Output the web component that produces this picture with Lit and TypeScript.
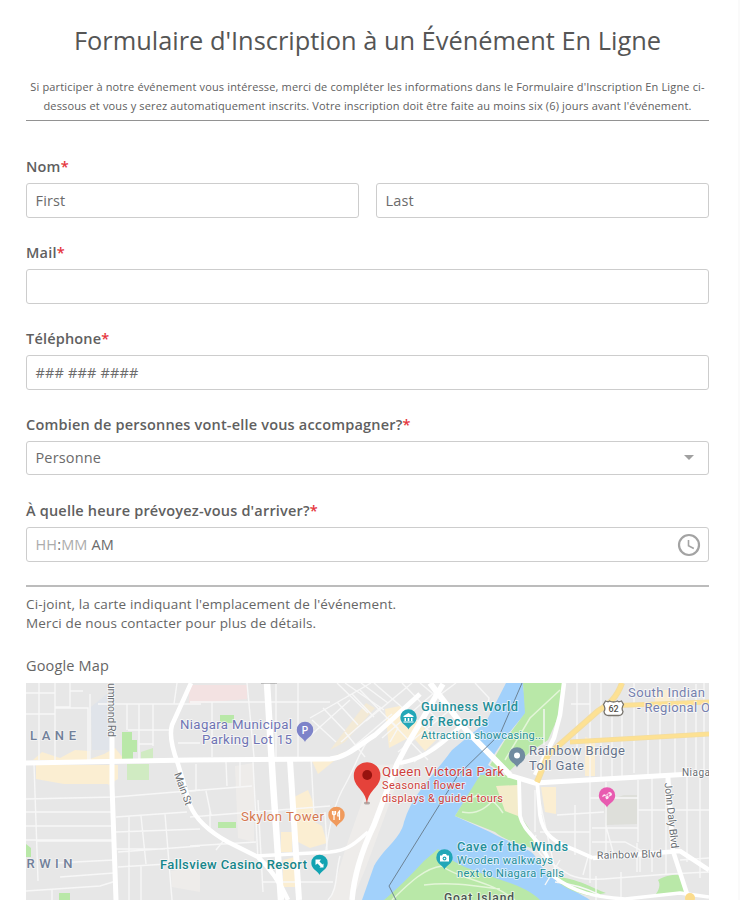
import { LitElement, html, svg, css } from "lit";
import { customElement, property } from "lit/decorators.js";

type Label = { x: number; y: number; w: number; size: number; cls: string; text: string; rot?: number };

const minorRoads = [
  // north-west blocks
  "M39 683V760M55 683V762M26 693H55M26 714H55M70 683V707H55M70 691H83M55 708H88V760M90 694V760M98 704H201M127 704V730M139 704V760M153 704V746M177 683L174 704M128 730H170M139 744H153M178 743H200",
  "M26 799L115 797L200 790M26 826H112M26 840H112M26 812H114M36 841H113M34 764L38 881M55 863L114 860M60 877L114 873M26 891L100 886L116 881M52 889V900",
  "M116 817L187 812M116 832L200 829M129 816V866M141 816L146 864M165 814L172 900M118 867L200 862M118 852L200 846M129 866V900M141 866V900M196 790V764M116 849H165",
  // centre blocks
  "M190 702H310M212 702V757M276 683V757M298 683V757M247 683L254 757M253 762L258 860M190 791L252 786M206 791L211 815M190 817L330 806M311 757L314 815M226 762L227 786M240 762V786M190 846L256 842M224 840L216 850M258 800L263 892M210 810V830M270 702H330",
  "M310 718L371 683M312 720L336 742M323 708L345 731M337 702L358 725M352 694L374 717M337 683L368 713M345 683L384 710M361 683L388 703M311 735L350 700M345 754L392 714M365 757L345 732M325 812L327 850M341 742L380 708",
  "M326 850C330 820 336 800 345 785C358 762 358 752 372 735M262 882H333M340 856C335 875 338 890 328 900",
  // upper centre streets
  "M360 690L428 760M374 683L442 742M402 683L438 720M366 721L412 683M382 738L435 692M398 752L450 710M414 762L462 724M420 683L437 697L456 683M388 718L398 728L390 742M475 683L489 698L487 711",
  // east grid
  "M577 683V760M590 683V779M601 683V778M612 713V776M622 710V776M634 683V773M648 706V776M660 703V774M675 690V774M686 690V774M696 684V774M704 683V772M571 704H590M544 709V745M536 784L558 883M590 782V883M606 782V858M638 780V842M652 776V872M666 776V875M687 776V862M700 776V878M557 815L604 812M590 798H638M592 828H638M638 810H709M540 832H590M592 842H625L640 850V872M606 826L613 852M535 832V790M575 805V855",
  "M536 835C530 850 545 860 570 875C592 884 600 877 709 872M560 860L545 885M588 857L583 875M596 876V900M621 872V900M637 843V872M680 860L709 858M555 882C575 884 590 890 600 895",
];

const mainRoads = [
  { d: "M26 763L190 760L330 759C348 757 360 744 375 735L420 694", w: 5 },
  { d: "M112 735L112 785L116 900", w: 5 },
  { d: "M191 683L172 725C169 735 172 748 178 764L190 805C196 820 210 832 228 842L258 857C270 868 280 882 288 900", w: 4.5 },
  { d: "M267 683L273 783L281 900", w: 6.5 },
  { d: "M290 760L299 900", w: 6 },
  { d: "M256 856L330 852C350 850 356 842 368 832", w: 3.5 },
  { d: "M443 684L407 745L397 764L374 825C362 850 354 876 352 900", w: 5.5 },
  { d: "M400 763C425 759 445 742 465 722", w: 4 },
  { d: "M430 683L466 730L510 775", w: 6 },
  { d: "M564 683L560 715L554 738L535 775", w: 4.5 },
  { d: "M508 775L535 783L709 773", w: 5 },
  { d: "M519 779L520 816C524 832 538 838 548 858M537 780L540 815C543 835 554 842 575 850L593 858", w: 3.8 },
  { d: "M593 858L680 851L709 870", w: 4.5 },
  { d: "M668 775L673 851L689 900", w: 4.5 },
  { d: "M553 876C575 893 595 897 625 899L680 893L709 897", w: 3.5 },
];

const parks = [
  "M122 732H132V740H137V752H133V759H122Z",
  "M220 715H234V723H220Z",
  "M218 822H236V828H218Z",
  "M26 844L31 848V857H26Z",
  "M59 893H70V900H59Z",
  "M523 683H564L559 715L548 740L530 752L506 774L490 765L505 740L525 713Z",
  "M506 775L518 779L520 815L530 830L536 850C524 845 505 841 495 832L455 816L466 798L480 775Z",
  "M658 880C665 875 676 874 681 875L688 892L655 895C659 891 661 884 658 880Z",
  "M553 876C580 879 592 888 606 893L590 896C570 892 558 884 553 876Z",
];

const sand = [
  "M33 760L42 752L60 758L75 750L90 751V759L104 754L115 748L125 760Z",
  "M36 765H110V784H64L36 779Z",
  "M108 765H118V779L108 785Z",
  "M345 752L318 774L312 761L330 758Z",
  "M294 797L308 790L313 802V821L322 826L327 843L310 848L298 842Z",
  "M281 832H292V852H281ZM283 860L295 857V887H283Z",
  "M385 709L400 706L437 739L425 751L412 736L389 748Z",
  "M497 786L518 785V816L505 811Z",
  "M541 787H556V814L545 812Z",
  "M585 737L595 740V776H585Z",
  "M655 690H670V703L655 706Z",
];

const labels: Label[] = [
  { x: 30, y: 740, w: 46, size: 13, cls: "area", text: "LANE" },
  { x: 26.5, y: 867.5, w: 46, size: 13, cls: "area", text: "RWIN" },
  { x: 108, y: 683, w: 54, size: 10.5, cls: "street", text: "ummond Rd", rot: 90 },
  { x: 174, y: 774, w: 34, size: 10.5, cls: "street", text: "Main St", rot: 70 },
  { x: 180, y: 729, w: 112, size: 13.2, cls: "indigo", text: "Niagara Municipal" },
  { x: 202, y: 744, w: 90, size: 13.2, cls: "indigo", text: "Parking Lot 15" },
  { x: 241, y: 820.5, w: 83, size: 13.2, cls: "orange", text: "Skylon Tower" },
  { x: 160, y: 869, w: 147, size: 13, cls: "teal bold", text: "Fallsview Casino Resort" },
  { x: 421, y: 711, w: 97, size: 12.8, cls: "teal", text: "Guinness World" },
  { x: 421, y: 726, w: 67, size: 12.8, cls: "teal", text: "of Records" },
  { x: 421, y: 739, w: 123, size: 11, cls: "teal light", text: "Attraction showcasing..." },
  { x: 382, y: 776, w: 122, size: 13.2, cls: "red", text: "Queen Victoria Park" },
  { x: 382, y: 789, w: 83, size: 11, cls: "red", text: "Seasonal flower" },
  { x: 382, y: 802, w: 121, size: 11, cls: "red", text: "displays & guided tours" },
  { x: 529, y: 755, w: 96, size: 13, cls: "slate", text: "Rainbow Bridge" },
  { x: 529, y: 769.5, w: 55, size: 13, cls: "slate", text: "Toll Gate" },
  { x: 628, y: 697, w: 77, size: 13, cls: "violet", text: "South Indian" },
  { x: 637, y: 712, w: 73, size: 13, cls: "violet", text: "- Regional O" },
  { x: 682, y: 776, w: 28, size: 10, cls: "street", text: "Niaga" },
  { x: 664.5, y: 783, w: 66, size: 10.5, cls: "street", text: "John Daly Blvd", rot: 84 },
  { x: 597, y: 859, w: 65, size: 10.5, cls: "street", text: "Rainbow Blvd", rot: -1.5 },
  { x: 457, y: 851, w: 111, size: 12.8, cls: "teal", text: "Cave of the Winds" },
  { x: 457, y: 864, w: 96, size: 11, cls: "teal light", text: "Wooden walkways" },
  { x: 457, y: 877, w: 107, size: 11, cls: "teal light", text: "next to Niagara Falls" },
  { x: 444, y: 902, w: 70, size: 12, cls: "dark", text: "Goat Island" },
];

const pin = (x: number, y: number, color: string, glyph: unknown) => svg`
  <g transform="translate(${x} ${y})">
    <path d="M0 11.5C-1 7.5-8.2 6-8.2-.6A8.2 8.2 0 0 1 8.2-.6C8.2 6 1 7.5 0 11.5Z" fill=${color}></path>
    ${glyph}
  </g>`;

@customElement("venue-map")
class VenueMap extends LitElement {
  static styles = css`
    :host { display: block; height: 217px; overflow: hidden; }
    svg { display: block; width: 100%; height: 100%; }
    text { font-family: Roboto, "Liberation Sans", sans-serif; font-weight: 500; paint-order: stroke; stroke: #fff; stroke-opacity: .65; stroke-width: 1.8px; stroke-linejoin: round; }
    .area { fill: #71809a; stroke-opacity: .4; }
    .street { fill: #6b6f74; font-weight: 400; }
    .indigo { fill: #6f74b4; font-weight: 400; }
    .violet { fill: #7580ae; font-weight: 400; }
    .orange { fill: #d57850; font-weight: 400; }
    .teal { fill: #238f98; }
    .bold { fill: #16868b; }
    .red { fill: #cf3f3b; font-weight: 400; }
    .slate { fill: #65738b; font-weight: 400; }
    .dark { fill: #4b5553; }
    .light { font-weight: 400; }
    .plain { stroke: none; }
    .minor { stroke: #f7f7f7; stroke-width: 1.4; fill: none; }
    .major { stroke: #fff; fill: none; stroke-linejoin: round; }
    .casing { stroke: #f3dda0; fill: none; }
    .highway { stroke: #fde193; fill: none; }
    .path { stroke: #e3f5d8; stroke-width: 1.5; fill: none; }
    .border { stroke: #6c8294; stroke-width: 1; fill: none; }
  `;

  render() {
    return html`<svg viewBox="26 683 683 217" preserveAspectRatio="none" role="img" aria-label="Google Map">
      <rect x="26" y="683" width="683" height="217" fill="#e7e7e7"></rect>
      <path d="M91 707L112 690V750H92Z" fill="#e0e4ea"></path>
      <path d="M189 685H247V699L189 704Z" fill="#f3e2e2"></path>
      <path d="M235 766L254 763V842L238 838ZM171 871L200 866V892L172 887ZM404 764L365 870L352 900H330L345 850L375 765Z" fill="#eeecea"></path>
      <path d="M604 802L624 795L637 795V824L606 825Z" fill="#dedfda"></path>
      <path d="M127 764H149V780H127ZM141 752L153 748V762H141Z" fill="#d0ebc2"></path>
      <path d="M366 703L375 708L345 742L330 750Z" fill="#f3ead6"></path>
      ${sand.map((d) => svg`<path d=${d} fill="#fbeed2"></path>`)}
      <path d="M506 683H523L526 713C512 728 496 750 488 765L506 777L480 777L455 816L490 832C510 843 530 848 535 856C546 880 575 890 590 900H362L374 866C385 847 401 838 404 822C412 795 430 780 452 750L486 722Z" fill="#a2d1fb"></path>
      ${parks.map((d) => svg`<path d=${d} fill="#b9e8a8"></path>`)}
      <path d="M384 900C396 890 412 874 424 861L438 849L448 858C480 878 520 880 540 900Z" fill="#b9e8a8"></path>
      <path d="M496 786L518 785V816L505 811Z" fill="#f4eccb"></path>
      ${minorRoads.map((d) => svg`<path class="minor" d=${d}></path>`)}
      ${mainRoads.map((r) => svg`<path class="major" d=${r.d} stroke-width=${r.w}></path>`)}
      <path class="path" d="M392 900C410 882 425 868 442 866C460 880 490 880 515 900M424 885C450 882 470 885 500 889M468 800C480 790 495 800 503 813M462 812C480 816 490 804 497 796M560 690L530 718L505 760"></path>
      <path class="casing" stroke-width="6" d="M622 683C616 700 607 705 598 711L548 755L537 782"></path>
      <path class="casing" stroke-width="5" d="M605 706L709 702M570 742L709 734"></path>
      <path class="highway" stroke-width="4" d="M622 683C616 700 607 705 598 711L548 755L537 782"></path>
      <path class="highway" stroke-width="3.5" d="M605 706L709 702M570 742L709 734"></path>
      <circle cx="690" cy="898" r="5" fill="#fbdc8d"></circle>
      <path class="border" d="M522 683L500 734L458 775L389 886L396 900"></path>
      <path d="M261 683H277" stroke="#8d8d8d" stroke-width="1"></path>

      ${labels.map((l) => svg`<text class=${l.cls} x=${l.x} y=${l.y} font-size=${l.size} textLength=${l.w}
        transform=${`rotate(${l.rot ?? 0} ${l.x} ${l.y})`}>${l.text}</text>`)}

      ${pin(305, 730.5, "#7d83c9", svg`<text class="plain" x="0" y="3.5" text-anchor="middle" font-size="10" fill="#fff">P</text>`)}
      ${pin(336.5, 815.5, "#f09a5c", svg`<path d="M-2.5-4.5V4.5M-4-4.5V-1.5Q-2.5 .5-1-1.5V-4.5M3 4.5V-4.5Q1-3 1.3 .5H3" stroke="#fff" stroke-width="1.2" fill="none"></path>`)}
      ${pin(319.5, 863.5, "#12a3b2", svg`<path d="M-4-4H1.5L0-2L3 1L1 3L-2 0L-4 1.5ZM4 4H0L4 0Z" fill="#fff"></path>`)}
      ${pin(408.5, 718, "#22a7b8", svg`<path d="M-5-2L0-5L5-2V-1H-5ZM-4 0H-2.5V3H-4ZM-.8 0H.8V3H-.8ZM2.5 0H4V3H2.5ZM-5 3.5H5V4.5H-5Z" fill="#fff"></path>`)}
      ${pin(444.5, 858, "#22a7b8", svg`<path d="M-4.5-2.5H-2.5L-1.5-4H1.5L2.5-2.5H4.5V3.5H-4.5Z" fill="#fff"></path><circle cy=".5" r="1.9" fill="#22a7b8"></circle><circle cy=".5" r=".8" fill="#fff"></circle>`)}
      ${pin(517, 756, "#718ba0", svg`<circle cy="-.5" r="3" fill="#fff"></circle>`)}
      ${pin(607, 796, "#e85bb0", svg`<path d="M-5 1Q-4-3-1-1L2-4Q5-4 5-1L2 1Q1 4-1 3L-2 0Z" fill="#fff" opacity=".85"></path><path d="M-3 1L3-2M1-3L2 1" stroke="#e85bb0" stroke-width=".8"></path>`)}

      <g transform="translate(613.5 708.5)">
        <path d="M-8-7.5Q-5-6-4-7.5Q0-5.5 4-7.5Q5-6 8-7.5L10-4Q7.5 0 9.5 3Q9 7 5 7H-5Q-9 7-9.5 3Q-7.5 0-10-4Z" fill="#fff" stroke="#77736c" stroke-width="1.3"></path>
        <text class="plain" x="0" y="3.5" text-anchor="middle" font-size="9" fill="#55514b">62</text>
      </g>

      <ellipse cx="367" cy="803" rx="3" ry="1.5" fill="#6b5b57" opacity=".45"></ellipse>
      <path d="M367 804C365.500 789 353.800 788 353.800 775.500A13.300 13.300 0 0 1 380.400 775.500C380.400 788 368.500 789 367 804Z" fill="#e5423a"></path>
      <circle cx="367.200" cy="775" r="4.900" fill="#98130f"></circle>
    </svg>`;
  }
}

@customElement("form-field")
class FormField extends LitElement {
  @property() label = "";

  static styles = css`
    :host { display: block; }
    .label { height: 20px; line-height: 21px; margin-bottom: 7px; font-size: 14.5px; font-weight: 600; letter-spacing: .19px; color: #606060; white-space: nowrap; }
    .star { color: #e5343c; }
    .row { display: flex; gap: 17px; }
  `;

  render() {
    return html`<div class="label">${this.label}<span class="star">*</span></div>
      <div class="row"><slot></slot></div>`;
  }
}

@customElement("app-root")
class AppRoot extends LitElement {
  static styles = css`
    :host { display: block; box-sizing: border-box; width: 740px; height: 900px; overflow: hidden; padding: 20px 29px 0 26px; background: #fff; border-right: 2px solid #fafafa; font-family: "Open Sans", "Noto Sans", sans-serif; color: #666; }
    .title { margin: 0; height: 40px; line-height: 40px; text-align: center; font-size: 25.4px; font-weight: 400; color: #555; white-space: nowrap; }
    .intro { margin: 17px -10px 0; line-height: 19px; text-align: center; font-size: 11px; letter-spacing: .15px; white-space: nowrap; color: #606060; }
    .intro span { display: block; }
    .rule { height: 1px; margin-top: 5px; background: #929292; }
    .fields { display: flex; flex-direction: column; gap: 24px; margin-top: 35px; }
    .arrival { margin-top: 1px; }
    .input { box-sizing: border-box; flex: 1; display: flex; align-items: center; height: 35px; padding: 0 7px 0 8.5px; border: 1px solid #cdcdcd; border-radius: 3px; font-size: 14.5px; letter-spacing: .15px; color: #6b6b6b; }
    .select { height: 34px; padding-bottom: 2px; }
    .grow { flex: 1; }
    .hint { color: #acacac; }
    .caret { width: 0; height: 0; margin-right: 7px; border: 5.500px solid transparent; border-top-color: #a0a0a0; border-bottom: 0; }
    .clock { width: 24px; height: 24px; }
    .thick { height: 2px; margin-top: 23px; background: #bcbcbc; }
    .note { margin: 8px 0 0; line-height: 19px; font-size: 13.5px; letter-spacing: .15px; white-space: nowrap; }
    .caption { height: 20px; line-height: 20px; margin: 23px 0 7px; font-size: 14.5px; letter-spacing: .15px; }
  `;

  render() {
    return html`
      <h1 class="title">Formulaire d'Inscription à un Événément En Ligne</h1>
      <p class="intro">
        <span>Si participer à notre événement vous intéresse, merci de compléter les informations dans le Formulaire d'Inscription En Ligne ci-</span>
        <span>dessous et vous y serez automatiquement inscrits. Votre inscription doit être faite au moins six (6) jours avant l'événement.</span>
      </p>
      <div class="rule"></div>
      <div class="fields">
        <form-field label="Nom"><div class="input">First</div><div class="input">Last</div></form-field>
        <form-field label="Mail"><div class="input"></div></form-field>
        <form-field label="Téléphone"><div class="input">### ### ####</div></form-field>
        <form-field label="Combien de personnes vont-elle vous accompagner?">
          <div class="input select"><span class="grow">Personne</span><i class="caret"></i></div>
        </form-field>
        <form-field class="arrival" label="À quelle heure prévoyez-vous d'arriver?">
          <div class="input"><span class="grow"><span class="hint">HH</span>:<span class="hint">MM</span> AM</span>
            <svg class="clock" viewBox="0 0 24 24" fill="none" stroke="#a3a3a3"><circle cx="12" cy="12" r="10" stroke-width="2.200"></circle><path d="M11.500 7V12.800L16.800 15.500" stroke-width="1.600"></path></svg>
          </div>
        </form-field>
      </div>
      <div class="thick"></div>
      <p class="note">Ci-joint, la carte indiquant l'emplacement de l'événement.<br>Merci de nous contacter pour plus de détails.</p>
      <div class="caption">Google Map</div>
      <venue-map></venue-map>
    `;
  }
}
